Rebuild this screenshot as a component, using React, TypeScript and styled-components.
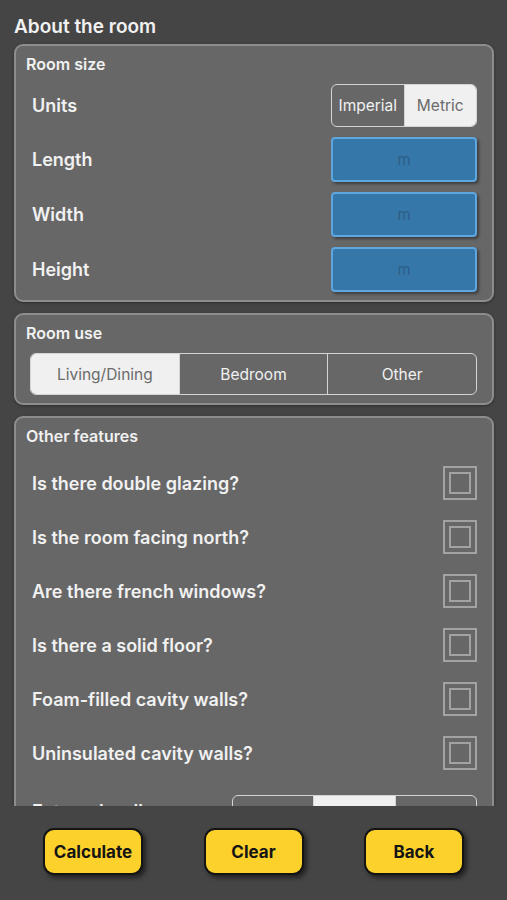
import styled, { createGlobalStyle } from 'styled-components';

const COLORS = {
  page: '#454545',
  panel: '#676767',
  panelBorder: '#8d8d8d',
  text: '#f1f1f1',
  segBorder: '#d4d4d4',
  segActive: '#f0f0f0',
  segActiveText: '#6a6a6a',
  input: '#3677a9',
  inputBorder: '#5ea6de',
  inputText: '#2b5f88',
  check: '#a2a2a2',
  yellow: '#fdd12c',
  ink: '#141414',
};

const GlobalStyle = createGlobalStyle`
  html, body {
    margin: 0;
    padding: 0;
    background: ${COLORS.page};
  }
  body {
    font-family: Inter, "Liberation Sans", sans-serif;
    color: ${COLORS.text};
  }
`;

const Screen = styled.div`
  display: flex;
  flex-direction: column;
  width: 507px;
  height: 900px;
  background: ${COLORS.page};
`;

const ScrollArea = styled.div`
  height: 806px;
  overflow: hidden;
  padding: 15px 13px 0 14px;
  box-sizing: border-box;
  display: flex;
  flex-direction: column;
  gap: 11px;
`;

const PageTitle = styled.h1`
  margin: 0 0 -6px;
  font-size: 19px;
  line-height: 24px;
  font-weight: 600;
`;

const Panel = styled.section`
  flex-shrink: 0;
  background: ${COLORS.panel};
  border: 2px solid ${COLORS.panelBorder};
  border-radius: 9px;
  padding: 8px 15px 8px 9px;
  display: flex;
  flex-direction: column;
  box-shadow: 0 1px 3px rgba(0, 0, 0, 0.35);
`;

const PanelTitle = styled.h2`
  margin: 0 0 10px 1px;
  font-size: 16px;
  line-height: 20px;
  font-weight: 600;
`;

const Rows = styled.div<{ $gap: number }>`
  display: flex;
  flex-direction: column;
  gap: ${(p) => p.$gap}px;
`;

const Row = styled.div<{ $height?: number; $top?: boolean }>`
  display: flex;
  align-items: ${(p) => (p.$top ? 'flex-start' : 'center')};
  justify-content: space-between;
  padding-left: 7px;
  padding-top: ${(p) => (p.$top ? 15 : 0)}px;
  min-height: ${(p) => p.$height ?? 0}px;
`;

const RowLabel = styled.span`
  font-size: 18px;
  font-weight: 600;
`;

const Segmented = styled.div<{ $width: number; $height: number }>`
  display: flex;
  width: ${(p) => p.$width}px;
  height: ${(p) => p.$height}px;
  border: 1.5px solid ${COLORS.segBorder};
  border-radius: 6px;
  overflow: hidden;
  box-sizing: border-box;
`;

const Segment = styled.div<{ $active?: boolean }>`
  flex: 1;
  display: flex;
  align-items: center;
  justify-content: center;
  font-size: 15.5px;
  color: ${(p) => (p.$active ? COLORS.segActiveText : COLORS.text)};
  background: ${(p) => (p.$active ? COLORS.segActive : 'transparent')};
  & + & {
    border-left: 1.5px solid ${COLORS.segBorder};
  }
`;

const WallLabel = styled(RowLabel)`
  line-height: 42px;
  margin-top: -4px;
`;

const MeasureInput = styled.div`
  width: 146px;
  height: 45px;
  box-sizing: border-box;
  display: flex;
  align-items: center;
  justify-content: center;
  background: ${COLORS.input};
  border: 2px solid ${COLORS.inputBorder};
  border-radius: 4px;
  box-shadow: 2px 2px 3px rgba(0, 0, 0, 0.4);
  color: ${COLORS.inputText};
  font-size: 15px;
`;

const CheckBox = styled.div`
  width: 34px;
  height: 34px;
  box-sizing: border-box;
  border: 2px solid ${COLORS.check};
  padding: 4px;
  &::after {
    content: '';
    display: block;
    width: 100%;
    height: 100%;
    box-sizing: border-box;
    border: 2px solid ${COLORS.check};
  }
`;

const RoomUseBar = styled.div`
  padding-left: 5px;
`;

const BottomBar = styled.footer`
  flex: 1;
  display: flex;
  justify-content: space-between;
  align-items: flex-start;
  padding: 22px 43px 0;
  background: ${COLORS.page};
`;

const ActionButton = styled.button`
  width: 100px;
  height: 47px;
  background: ${COLORS.yellow};
  border: 2px solid ${COLORS.ink};
  border-radius: 11px;
  color: ${COLORS.ink};
  font-family: Inter, "Liberation Sans", sans-serif;
  font-size: 17px;
  font-weight: 700;
  box-shadow: 3px 3px 4px rgba(0, 0, 0, 0.5);
  padding: 0;
`;

const questions = [
  'Is there double glazing?',
  'Is the room facing north?',
  'Are there french windows?',
  'Is there a solid floor?',
  'Foam-filled cavity walls?',
  'Uninsulated cavity walls?',
];

export default function App(): JSX.Element {
  return (
    <>
      <GlobalStyle />
      <Screen>
        <ScrollArea>
          <PageTitle>About the room</PageTitle>

          <Panel>
            <PanelTitle>Room size</PanelTitle>
            <Rows $gap={10}>
              <Row>
                <RowLabel>Units</RowLabel>
                <Segmented $width={146} $height={43}>
                  <Segment>Imperial</Segment>
                  <Segment $active>Metric</Segment>
                </Segmented>
              </Row>
              {['Length', 'Width', 'Height'].map((label) => (
                <Row key={label}>
                  <RowLabel>{label}</RowLabel>
                  <MeasureInput>m</MeasureInput>
                </Row>
              ))}
            </Rows>
          </Panel>

          <Panel>
            <PanelTitle>Room use</PanelTitle>
            <RoomUseBar>
              <Segmented $width={447} $height={42}>
                <Segment $active>Living/Dining</Segment>
                <Segment>Bedroom</Segment>
                <Segment>Other</Segment>
              </Segmented>
            </RoomUseBar>
          </Panel>

          <Panel>
            <PanelTitle>Other features</PanelTitle>
            <Rows $gap={0}>
              {questions.map((q) => (
                <Row key={q} $height={54}>
                  <RowLabel>{q}</RowLabel>
                  <CheckBox />
                </Row>
              ))}
              <Row $height={72} $top>
                <WallLabel>External walls</WallLabel>
                <Segmented $width={245} $height={42}>
                  <Segment>Solid</Segment>
                  <Segment $active>Cavity</Segment>
                  <Segment>Timber</Segment>
                </Segmented>
              </Row>
            </Rows>
          </Panel>
        </ScrollArea>

        <BottomBar>
          <ActionButton>Calculate</ActionButton>
          <ActionButton>Clear</ActionButton>
          <ActionButton>Back</ActionButton>
        </BottomBar>
      </Screen>
    </>
  );
}
